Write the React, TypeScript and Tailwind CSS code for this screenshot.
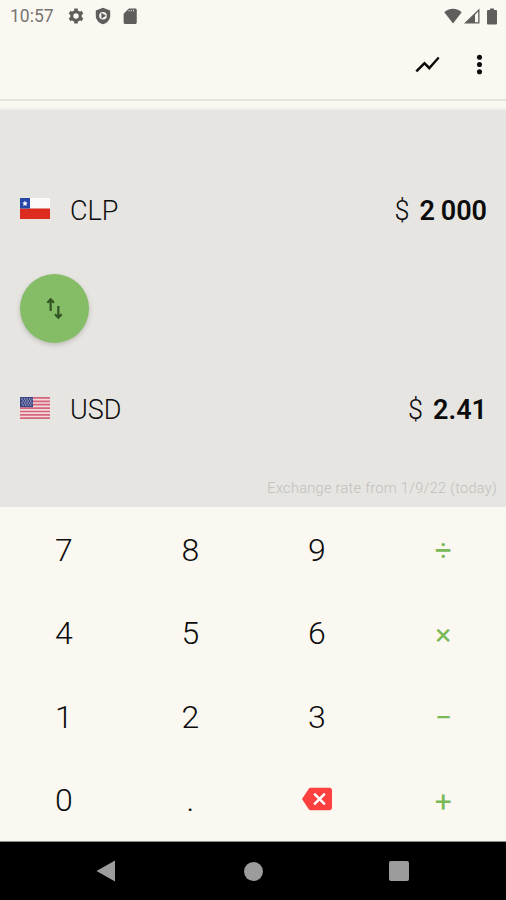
import type { ReactNode } from 'react'

function StatusBar() {
  return (
    <div className="flex h-8 items-center justify-between pl-[10px] pr-[9px] text-[#5f5e5c]">
      <div className="flex items-center">
        <span className="w-[44px] whitespace-nowrap text-[17.5px] leading-8 text-[#777573]">10:57</span>
        <svg className="ml-[13px] h-[18px] w-[18px]" viewBox="0 0 24 24" fill="none" stroke="currentColor">
          <circle cx="12" cy="12" r="5.7" strokeWidth="4.2" />
          <path
            d="M12 2v4M12 18v4M3.4 7l3.4 2M17.2 15l3.4 2M3.4 17l3.4-2M17.2 9l3.4-2"
            strokeWidth="4.8"
          />
        </svg>
        <svg className="ml-[9px] h-[18px] w-[18px]" viewBox="0 0 24 24" fill="currentColor">
          <path
            fillRule="evenodd"
            d="M12 1 2.400 4.500v7c0 5.200 4 9.900 9.600 11.500 5.600-1.600 9.600-6.300 9.600-11.500v-7zM12 6.500a5.100 5.100 0 1 1 0 10.200A5.100 5.100 0 0 1 12 6.500zM9.800 7.600v8l6.300-4z"
          />
        </svg>
        <svg className="ml-[9px] h-[18px] w-[18px]" viewBox="0 0 24 24" fill="currentColor">
          <path
            fillRule="evenodd"
            d="M19 2h-8.500L3.500 9v11.500c0 1.100.9 2 2 2H19c1.100 0 2-.9 2-2V4c0-1.100-.9-2-2-2zM10 5.500h1.200V4H10zm3 0h1.200V4H13zm3 0h1.200V4H16z"
          />
        </svg>
      </div>
      <div className="flex items-center">
        <svg className="h-[16px] w-[18px]" viewBox="0 0 18 16" fill="currentColor">
          <path d="M9 15.500.3 4.200C2.500 2 5.500.8 9 .8s6.500 1.200 8.700 3.400z" />
        </svg>
        <svg className="ml-[2px] h-[16px] w-[16px]" viewBox="0 0 16 16">
          <path d="M0 15.500 15.500.5v15z" fill="currentColor" />
          <path d="M11 6.800 14.200 3.600v10.600H11z" fill="#fbf8f1" />
        </svg>
        <svg className="ml-[7px] h-[17px] w-[10px]" viewBox="0 0 10 17" fill="currentColor">
          <path d="M3 .5h4V2h2q1 0 1 1v12.500q0 1-1 1H1q-1 0-1-1V3q0-1 1-1h2z" />
        </svg>
      </div>
    </div>
  )
}

function Toolbar() {
  return (
    <div className="flex h-[67px] items-center justify-end pb-[2px] pr-3">
      <button aria-label="Chart" className="mr-[23px]">
        <svg className="h-[29px] w-[29px]" viewBox="0 0 24 24" fill="currentColor">
          <path d="m3.500 18.490 6-6.010 4 4L22 6.920l-1.410-1.410-7.090 7.970-4-4L2 16.990z" />
        </svg>
      </button>
      <button aria-label="More">
        <svg className="h-[29px] w-[29px]" viewBox="0 0 24 24" fill="currentColor">
          <circle cx="12" cy="6" r="2.100" />
          <circle cx="12" cy="12" r="2.100" />
          <circle cx="12" cy="18" r="2.100" />
        </svg>
      </button>
    </div>
  )
}

function ChileFlag() {
  return (
    <svg className="h-[21px] w-[30px]" viewBox="0 0 30 21">
      <path d="M0 0h30v10.500H0z" fill="#fbfafa" />
      <path d="M0 10.500h30V21H0z" fill="#dc2c20" />
      <path d="M0 0h10v10.500H0z" fill="#2647a3" />
      <path d="m5 2.600.8 1.900 2 .1-1.500 1.300.5 2L5 6.900 3.200 7.900l.5-2-1.500-1.300 2-.1z" fill="#fff" />
    </svg>
  )
}

function UsFlag() {
  return (
    <svg className="h-[22px] w-[30px]" viewBox="0 0 30 22">
      <path d="M0 0h30v22H0z" fill="#f2d9dc" />
      <path
        d="M0 .9h30M0 4.300h30M0 7.700h30M0 11.100h30M0 14.500h30M0 17.900h30M0 21.200h30"
        stroke="#d5667a"
        strokeWidth="1.700"
      />
      <path d="M0 0h13v10.200H0z" fill="#3c4683" />
      <path
        d="M1.500 2h11M2.500 4h9M1.500 6h11M2.500 8h9"
        stroke="#c3c6dc"
        strokeWidth="1.200"
        strokeDasharray="1.300 1.200"
      />
    </svg>
  )
}

interface CurrencyRowProps {
  flag: ReactNode
  code: string
  amount: string
}

function CurrencyRow({ flag, code, amount }: CurrencyRowProps) {
  return (
    <div className="flex h-10 items-center pl-5 pr-[19px] text-[27px] leading-10">
      <div className="mr-5 pb-[5px]">{flag}</div>
      <span className="font-[350]">{code}</span>
      <span className="ml-auto font-[350]">$</span>
      <span className="ml-[10px] font-semibold [word-spacing:-1px]">{amount}</span>
    </div>
  )
}

const keys = ['7', '8', '9', '÷', '4', '5', '6', '×', '1', '2', '3', '−', '0', '.', 'del', '+']

function Key({ value }: { value: string }) {
  if (value === 'del') {
    return (
      <button aria-label="Delete" className="flex items-center justify-center pl-[2px] text-[#fc4040]">
        <svg className="h-[30px] w-[30px]" viewBox="0 0 24 24">
          <path d="M8 6h12v12H8z" fill="#fff" />
          <path
            fill="currentColor"
            d="M22 3H7c-.69 0-1.230.35-1.590.88L0 12l5.410 8.110c.36.53.9.89 1.590.89h15c1.100 0 2-.9 2-2V5c0-1.100-.9-2-2-2zm-3 12.590L17.590 17 14 13.410 10.410 17 9 15.590 12.590 12 9 8.410 10.410 7 14 10.590 17.590 7 19 8.410 15.410 12 19 15.590z"
          />
        </svg>
      </button>
    )
  }
  if ('÷×−+'.includes(value)) {
    return <button className="pl-px pt-[4px] text-[30px] text-[#79b957]">{value}</button>
  }
  return <button className="pl-px pt-[2px] text-[32px] font-[350]">{value}</button>
}

export default function App() {
  return (
    <div className="flex h-[900px] w-[506px] flex-col overflow-hidden bg-[#fbf8f1] font-['Roboto',sans-serif] text-[#0c0c0c]">
      <StatusBar />
      <Toolbar />
      <div className="h-[2px] bg-[#e5e3de]" />
      <div className="h-[9px] bg-linear-to-b from-[#fbf8f1] from-60% to-[#efede7]" />

      {/* Conversion panel */}
      <div className="flex h-[397px] flex-col bg-[#e6e5e1] pt-[81px]">
        <CurrencyRow flag={<ChileFlag />} code="CLP" amount="2 000" />
        <button
          aria-label="Swap"
          className="ml-5 mt-[43px] flex h-[69px] w-[69px] items-center justify-center rounded-full bg-[#85bc66] shadow-[0_2px_5px_rgba(0,0,0,0.18)]"
        >
          <svg className="mb-px h-[23px] w-[23px]" viewBox="0 0 24 24" fill="none" stroke="#335523" strokeWidth="2.300">
            <path d="M8 14.500V3M4.500 6l3.500-3.500L11.500 6M16 9.500V21M12.500 18l3.500 3.500 3.500-3.500" />
          </svg>
        </button>
        <div className="mt-[47px]">
          <CurrencyRow flag={<UsFlag />} code="USD" amount="2.41" />
        </div>
        <p className="mt-auto pb-[7px] pr-[9px] text-right text-[14.500px] font-[350] leading-[22px] tracking-[0.310px] text-[#c0bfbc]">
          Exchange rate from 1/9/22 (today)
        </p>
      </div>

      {/* Keypad */}
      <div className="grid h-[334px] grid-cols-4 grid-rows-4">
        {keys.map((k) => (
          <Key key={k} value={k} />
        ))}
      </div>

      {/* System navigation */}
      <div className="flex h-[59px] items-center justify-between border-t border-[#8b8b89] bg-black pl-[96px] pr-[97px]">
        <svg className="h-[22px] w-[19px]" viewBox="0 0 19 22" fill="#9c9c9c">
          <path d="M.5 11 19 .5v21z" />
        </svg>
        <div className="ml-[2px] h-[19px] w-[19px] rounded-full bg-[#9c9c9c]" />
        <div className="h-[20px] w-[20px] rounded-[2px] bg-[#9c9c9c]" />
      </div>
    </div>
  )
}
